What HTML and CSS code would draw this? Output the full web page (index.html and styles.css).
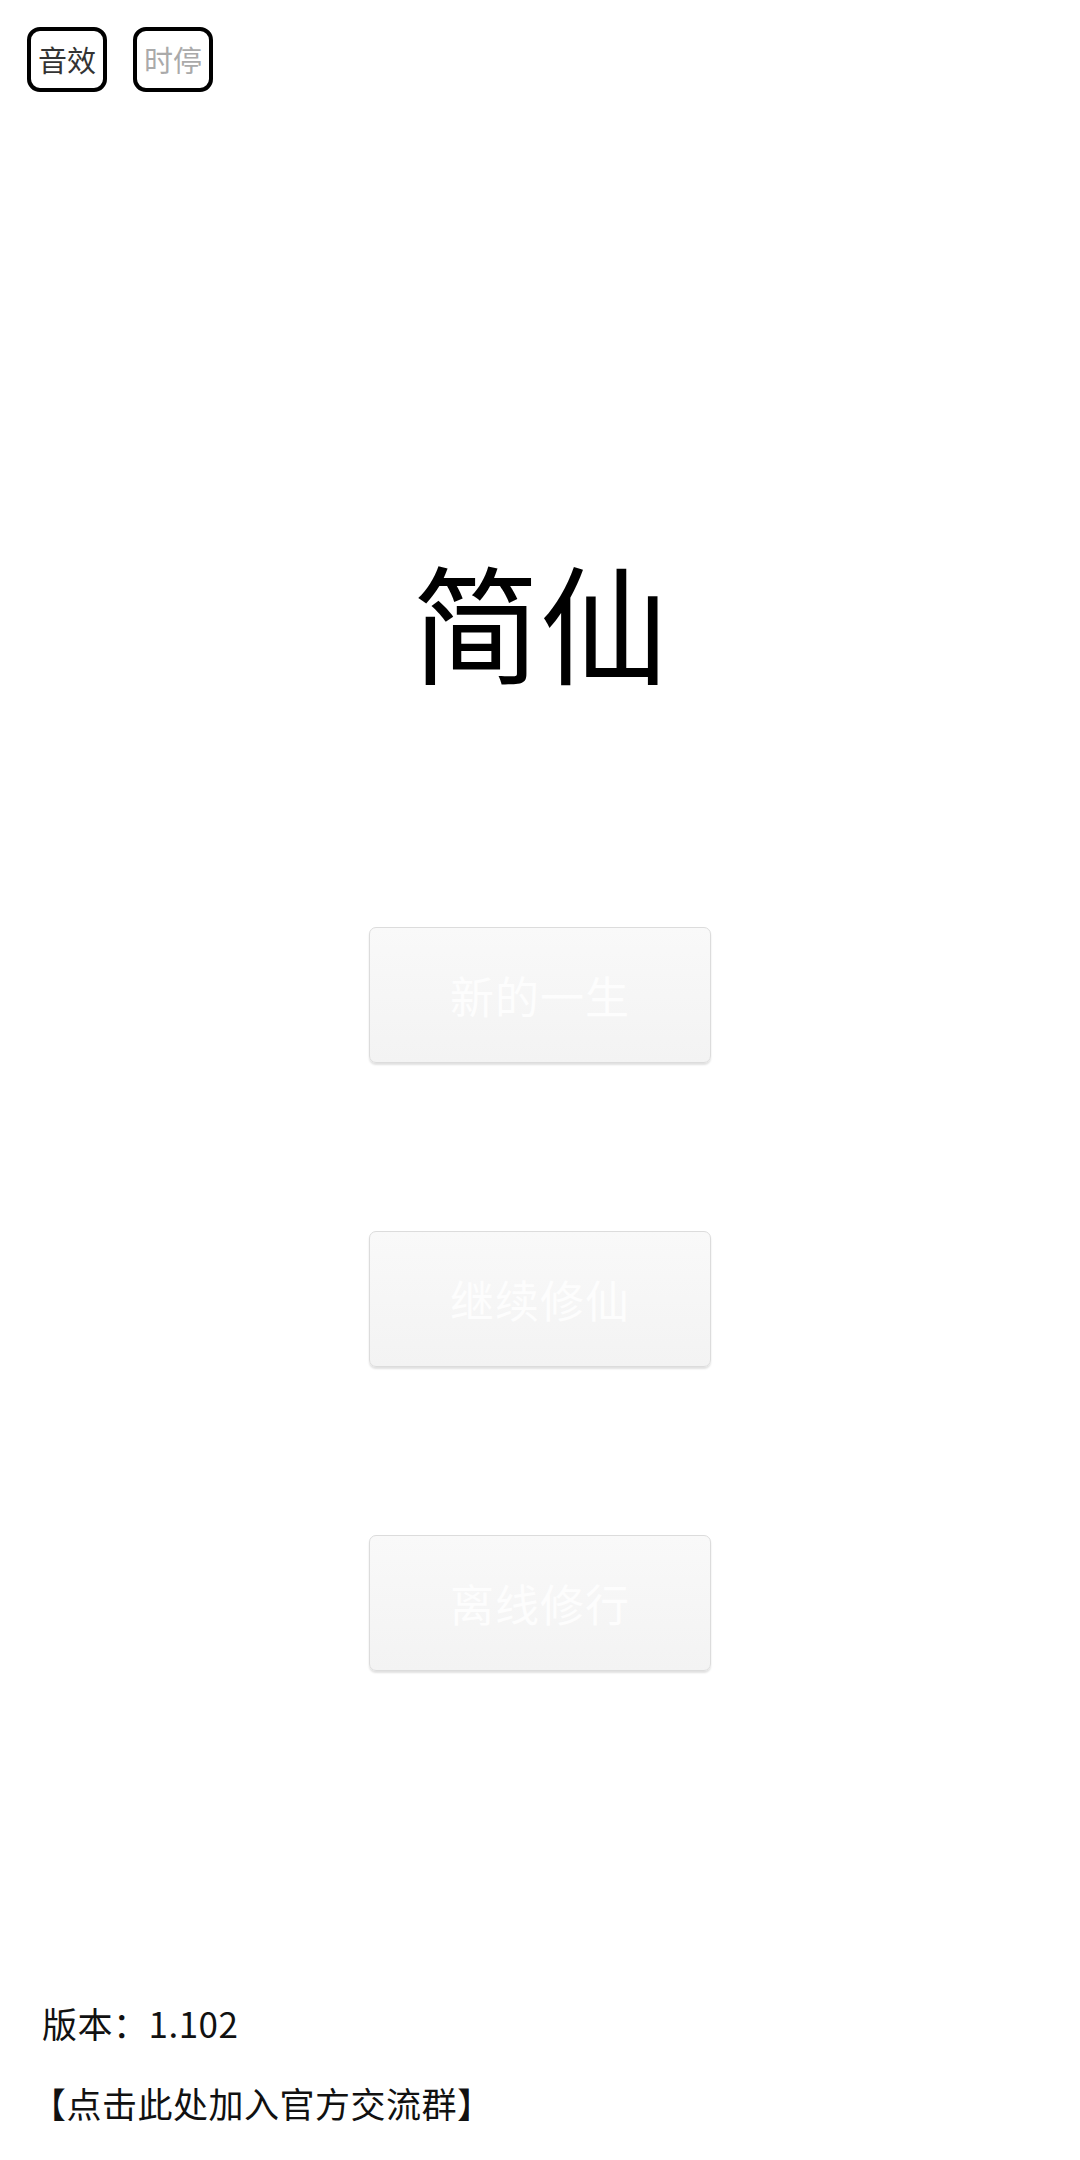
FILE: index.html
```html
<!DOCTYPE html>
<html lang="zh-CN">
<head>
<meta charset="utf-8">
<title>简仙</title>
<link rel="stylesheet" href="styles.css">
</head>
<body>
<div class="page">
  <div class="topbar">
    <div class="toggle on">音效</div>
    <div class="toggle off">时停</div>
  </div>
  <h1 class="title">简仙</h1>
  <div class="menu">
    <div class="menu-btn">新的一生</div>
    <div class="menu-btn">继续修仙</div>
    <div class="menu-btn">离线修行</div>
  </div>
  <div class="footer">
    <div class="version">版本：1.102</div>
    <div class="group">【点击此处加入官方交流群】</div>
  </div>
</div>
</body>
</html>
```
FILE: styles.css
```css
html, body {
  margin: 0;
  padding: 0;
  background: #ffffff;
}
.page {
  width: 1080px;
  height: 2160px;
  display: flex;
  flex-direction: column;
  font-family: "Noto Sans CJK SC", "Noto Sans", sans-serif;
  color: #000;
}
.topbar {
  display: flex;
  gap: 26px;
  padding: 27px 0 0 27px;
}
.toggle {
  box-sizing: border-box;
  width: 80px;
  height: 65px;
  border: 4px solid #000;
  border-radius: 13px;
  display: flex;
  align-items: center;
  justify-content: center;
  font-size: 29px;
  line-height: 1;
}
.toggle.on { color: #333; }
.toggle.off { color: #aaa; }
.title {
  margin: 464px 0 0 0;
  text-align: center;
  font-weight: normal;
  font-size: 128px;
  line-height: 1;
  height: 128px;
}
.menu {
  display: flex;
  flex-direction: column;
  align-items: center;
  gap: 168px;
  margin-top: 243px;
}
.menu-btn {
  box-sizing: border-box;
  width: 342px;
  height: 136px;
  border: 1px solid #dcdcdc;
  border-radius: 7px;
  background: linear-gradient(#f9f9f9, #f3f3f3);
  box-shadow: 0 2px 2px rgba(0,0,0,0.12);
  color: #fdfdfd;
  font-size: 44px;
  display: flex;
  align-items: center;
  justify-content: center;
  letter-spacing: 1px;
}
.footer {
  margin-top: auto;
  padding: 0 0 36px 42px;
  font-size: 35px;
  color: #111;
  display: flex;
  flex-direction: column;
  gap: 38px;
}
.version, .group { line-height: 1.2; }
.version { letter-spacing: 0.5px; }
.group { margin-left: -11px; letter-spacing: 0.5px; }
```
